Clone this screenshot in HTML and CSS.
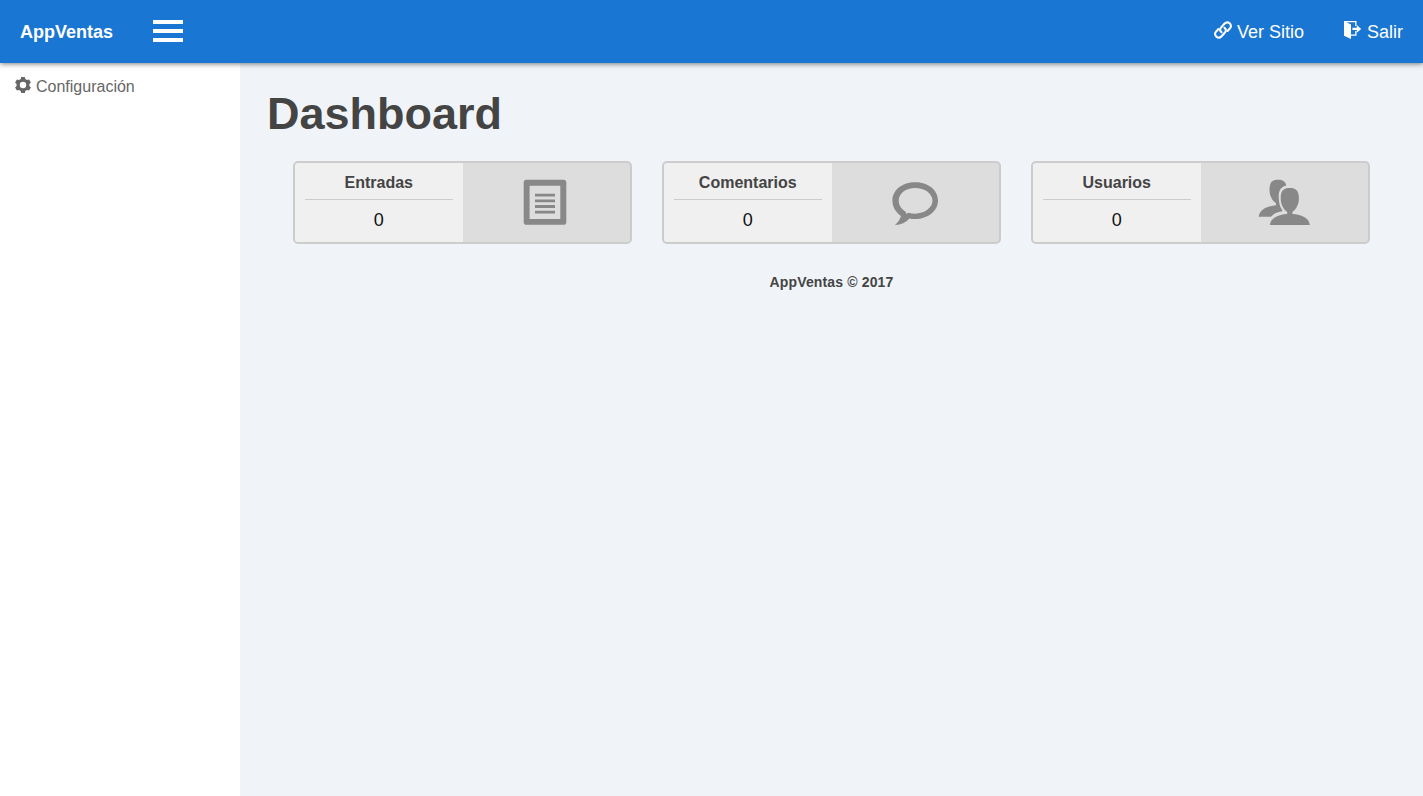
FILE: index.html
```html
<!DOCTYPE html>
<html lang="es">
<head>
<meta charset="utf-8">
<title>AppVentas</title>
<link rel="stylesheet" href="styles.css">
</head>
<body>
<header class="topbar">
  <a class="brand">AppVentas</a>
  <span class="burger"><i></i><i></i><i></i></span>
  <nav class="links">
    <a class="link"><svg class="link-icon" width="18" height="18" viewBox="0 0 18 18" fill="none" stroke="#fff" stroke-width="2.1" stroke-linecap="round"><path d="M7.5 11.2C5.7 10 5.7 7.8 7.1 6.4L10.4 2.8C12 1.1 14 .9 15.6 2.3C17.4 3.9 17.3 6 15.8 7.6L13.5 9.9"/><path d="M10.5 6.8C12.3 8 12.3 10.2 10.9 11.6L7.6 15.2C6 16.9 4 17.1 2.4 15.7C.6 14.1 .7 12 2.2 10.4L4.5 8.1"/></svg>Ver Sitio</a>
    <a class="link"><svg class="link-icon exit" width="18" height="19" viewBox="0 0 18 19"><path fill="#fff" d="M0 1H12.5V6H11.2V2.2H2.6L7 4.6V14.5H11.2V11H12.5V15.7H7V19L0 15.7Z"/><path fill="#fff" d="M8.4 7.8H12.8V5L17.2 8.9L12.8 12.8V10H8.4Z"/></svg>Salir</a>
  </nav>
</header>
<div class="layout">
  <aside class="sidebar">
    <a class="side-link"><svg width="16" height="16" viewBox="0 0 16 16"><path fill="#666" fill-rule="evenodd" d="M6.2 0H9.8L10.3 2.1L12 3.1L14.1 2.5L15.9 5.6L14.4 7.1V8.9L15.9 10.4L14.1 13.5L12 12.9L10.3 13.9L9.8 16H6.2L5.7 13.9L4 12.9L1.9 13.5L.1 10.4L1.6 8.9V7.1L.1 5.6L1.9 2.5L4 3.1L5.7 2.1ZM8 4.8A3.2 3.2 0 1 0 8 11.2A3.2 3.2 0 1 0 8 4.8Z"/></svg>Configuración</a>
  </aside>
  <main class="content">
    <h1 class="title">Dashboard</h1>
    <section class="cards">
      <article class="card">
        <div class="info"><h3 class="name">Entradas</h3><p class="count">0</p></div>
        <div class="picture"><svg width="52" height="48" viewBox="1 .3 52 48" fill="#888"><path fill-rule="evenodd" d="M7.5 2H44.5Q47.3 2 47.3 4.8V44.2Q47.3 47 44.5 47H7.5Q4.7 47 4.7 44.2V4.8Q4.7 2 7.5 2ZM10.6 8V41.3H41.3V8Z"/><path d="M16 16h20v2.8H16ZM16 21.7h20v2.8H16ZM16 27.4h20v2.8H16ZM16 33.1h20v2.8H16Z"/></svg></div>
      </article>
      <article class="card">
        <div class="info"><h3 class="name">Comentarios</h3><p class="count">0</p></div>
        <div class="picture"><svg width="52" height="48" viewBox="1.3 .3 52 48"><path fill="#888" fill-rule="evenodd" d="M27.5 4.5C40 4.5 50.3 12 50.3 22.8C50.3 33.5 40 41.3 27.5 41.3C25.5 41.3 23.5 41.1 21.7 40.7C18 44.8 13.5 47 7.2 47.3C10.2 44.5 12.5 41.5 13.2 38.2C8 34.5 4.7 29.2 4.7 22.8C4.7 12 15 4.5 27.5 4.5ZM27.5 10.2C18.2 10.2 11 15.6 11 22.9C11 27.5 13.5 31.5 18.2 34.2L18.4 36.2L20.5 35.1C22.8 35.7 25 36 27.5 36C36.8 36 44.8 30.2 44.8 22.9C44.8 15.6 36.8 10.2 27.5 10.2Z"/></svg></div>
      </article>
      <article class="card">
        <div class="info"><h3 class="name">Usuarios</h3><p class="count">0</p></div>
        <div class="picture"><svg width="52" height="48" viewBox="0 .3 52 48"><path fill="#888" d="M.7 39C1.5 32 9 28.3 18 27.5V25.5C14 23 11.5 17.5 11.5 12C11.5 4.5 14 2 20 2C24.5 2 27.8 4 28.3 7.8C22.5 9 20.5 13.5 20.7 19.5C20.9 25 22 29.5 24.3 32.5V33.6C19.5 34.3 15.5 36 13 39Z"/><path fill="#888" d="M12 47.3C12.3 40.3 20 36.8 29.2 36.2V34.2C25.2 31.6 22.7 26.5 22.7 20.5C22.7 12.7 25.8 10.2 31.8 10.2C37.8 10.2 40.9 12.7 40.9 20.5C40.9 26.5 38.4 31.6 34.4 34.2V36.2C44 36.8 51.5 40.3 51.8 47.3Z"/></svg></div>
      </article>
    </section>
    <footer class="footer">AppVentas © 2017</footer>
  </main>
</div>
</body>
</html>
```
FILE: styles.css
```css
* { box-sizing: border-box; }
body {
  margin: 0;
  height: 100vh;
  display: flex;
  flex-direction: column;
  overflow: hidden;
  background: #f0f4f9;
  color: #111;
  font-family: "Liberation Sans", Arial, sans-serif;
}
h1, h3, p { margin: 0; }
.topbar {
  position: relative;
  flex: none;
  display: flex;
  align-items: center;
  height: 63px;
  padding: 0 20px;
  background: #1976d2;
  color: #fff;
  font-size: 18px;
  box-shadow: 0 1px 5px rgba(0, 0, 0, .5);
}
.brand { width: 133px; padding-top: 2px; font-weight: bold; }
.burger { display: flex; flex-direction: column; gap: 5px; margin-top: -2px; }
.burger i { width: 30px; height: 4px; background: #fff; }
.links { display: flex; gap: 40px; margin-left: auto; padding-top: 2px; }
.link { display: flex; align-items: center; gap: 5px; }
.link-icon { margin-top: -5px; }
.exit { margin-top: -6px; }
.layout { flex: 1; display: flex; }
.sidebar { width: 240px; padding: 15px 15px; background: #fff; }
.side-link {
  display: flex;
  align-items: center;
  gap: 5px;
  color: #666;
  font-size: 16px;
}
.side-link svg { margin-top: -4px; }
.content { flex: 1; padding: 25px 38px 0; }
.title {
  margin-left: -11px;
  color: #444;
  font-size: 45px;
  line-height: 52px;
}
.cards { display: flex; padding: 21px 15px 0; gap: 30px; }
.card {
  flex: 1;
  display: flex;
  height: 83px;
  border: 2px solid #ccc;
  border-radius: 5px;
  background: #ddd;
  overflow: hidden;
}
.info { width: 50%; padding: 0 10px; background: #f0f0f0; text-align: center; }
.name {
  height: 37px;
  border-bottom: 1px solid #ccc;
  color: #444;
  font-size: 16px;
  line-height: 40px;
}
.count { font-size: 18px; line-height: 40px; }
.picture { width: 50%; display: flex; justify-content: center; padding-top: 15px; }
.footer {
  margin-top: 30px;
  color: #444;
  font-size: 14px;
  font-weight: bold;
  letter-spacing: .15px;
  line-height: 16px;
  text-align: center;
}
```
